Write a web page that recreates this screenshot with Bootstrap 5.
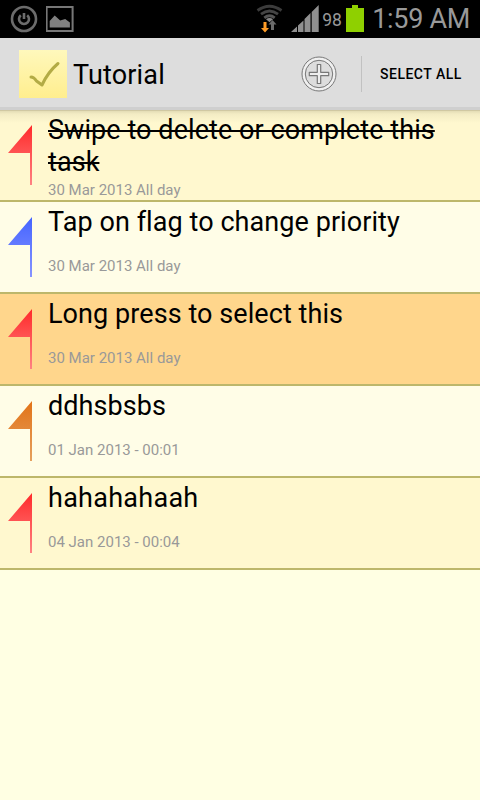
<!DOCTYPE html>
<html lang="en">
<head>
<meta charset="utf-8">
<meta name="viewport" content="width=device-width, initial-scale=1">
<title>Tutorial</title>
<link rel="stylesheet" href="https://cdn.jsdelivr.net/npm/bootstrap@5.3.0/dist/css/bootstrap.min.css">
<style>
body{font-family:Roboto,"Noto Sans",sans-serif;background:#ffffe3;color:#000;min-height:800px;overflow:hidden}
svg{display:block;flex:none}
.status-bar{height:38px;background:#000;color:#999;padding:0 10px 0 10px}
.pct{font-size:17.5px;line-height:38px;padding-top:1px;margin-left:2px;width:20px}
.battery{margin-left:4px}
.clock{font-size:27px;line-height:38px;margin-left:8px;white-space:nowrap;letter-spacing:-.3px}
.action-bar{height:72px;background:#ddd;padding:2px 0 0 19px;border-bottom:3px solid #cfcfcf}
.app-title{font-size:27px;line-height:32px;margin-left:6px;padding-top:2px;letter-spacing:.15px}
.divider{width:1px;height:36px;background:#c1c1c1;margin-left:24px}
.select-all{font-size:14px;font-weight:500;line-height:20px;color:#000;letter-spacing:.5px;margin-left:18px;width:100px;white-space:nowrap}
.list-group-flush>.list-group-item.task{height:92px;padding:4px 8px 0;border:0;border-bottom:2px solid #bdb76b;border-radius:0;color:#000}
.task-a{background:#fff8cf}
.task-b{background:#fffde7}
.task-on{background:#ffd68c}
.task-top{background:linear-gradient(#bdb48f 0,#e3dcb5 1px,#f3ecc4 4px,#fff8cf 13px)}
.flag{margin-top:11px}
.task-text{margin-left:16px}
.task-name{font-size:27px;line-height:32px;min-height:48px;letter-spacing:.07px}
.spaced{letter-spacing:.27px}
.done{text-decoration:line-through;text-decoration-thickness:2px}
.task-date{font-size:15px;line-height:20px;margin-top:2px;color:#999}
</style>
</head>
<body>
<header class="status-bar d-flex align-items-center">
  <svg width="28" height="38" viewBox="0 0 28 38" fill="none" stroke="#6c6c6c"><circle cx="14" cy="19" r="12" stroke-width="2.600"/><path d="M10.800 15.200a5 5 0 1 0 6.400 0M14 13v6" stroke-width="2.600"/></svg>
  <svg class="ms-2" width="28" height="38" viewBox="0 0 28 38"><path d="M.6 7h26v24h-26z" fill="none" stroke="#777" stroke-width="2"/><path d="M3.700 27.500V21l5-5.500 5.500 5 5-1.500 4.700 3.500v5z" fill="#808080"/></svg>
  <svg class="ms-auto" width="28" height="38" viewBox="0 0 28 38" fill="none"><g stroke="#444" stroke-width="2.800"><path d="M1.500 10.500q12-8.500 24 0" stroke="#3b3b3b"/><path d="M5 14.200q8.500-6.400 17 0"/><path d="M8.300 17.800q5.200-4 10.400 0" stroke="#555"/></g><path d="M10 19.300q3.500-2.500 7 0l-3.500 3z" fill="#888"/><path d="M15 30v-5.500h-2.500l4-4.500 4 4.500H18V30z" fill="#6b6b6b"/><path d="M7.500 22h3v6H13l-4 4.500L5 28h2.500z" fill="#ff9c27"/></svg>
  <svg width="36" height="38" viewBox="-5 0 36 38"><path d="M2 32l6-5.500V32zM9 25.500l5.500-5V32H9zM15.500 19l6-6V32h-6zM22.700 12l7-7v27h-7z" fill="#909090"/></svg>
  <span class="pct">98</span>
  <svg class="battery" width="18" height="38" viewBox="0 0 18 38"><path d="M0 8h6V5h6v3h6v24H0z" fill="#8fd000"/></svg>
  <span class="clock">1:59 AM</span>
</header>
<nav class="action-bar d-flex align-items-center">
  <svg width="48" height="48" viewBox="0 0 48 48"><defs><linearGradient id="note" x2="0" y2="1"><stop stop-color="#fff8bc"/><stop offset="1" stop-color="#ffee8e"/></linearGradient></defs><path d="M0 0h48v48H0z" fill="url(#note)"/><path d="M12 27q3 0 5.500 4l5.500 4q6-13 16-21.500" fill="none" stroke="#b3ab45" stroke-width="3" stroke-linecap="round" stroke-linejoin="round"/></svg>
  <span class="app-title">Tutorial</span>
  <svg class="ms-auto" width="36" height="36" viewBox="0 0 36 36" fill="none" stroke="#777"><circle cx="18" cy="18" r="15.500" stroke="#f0f0f0" stroke-width="3"/><circle cx="18" cy="18" r="17"/><circle cx="18" cy="18" r="13.700"/><path d="M16.300 8.500h3.400v7.800h8v3.400h-8v7.800h-3.400v-7.800h-8v-3.400h8z" fill="#eee" stroke-width="1.200" stroke-linejoin="round"/></svg>
  <div class="divider"></div>
  <span class="select-all">SELECT ALL</span>
</nav>
<svg width="0" height="0" class="position-absolute"><defs>
  <linearGradient id="red" x2="0" y2="1"><stop stop-color="#ff2a2a"/><stop offset="1" stop-color="#ff8282"/></linearGradient>
  <linearGradient id="blue" x2="0" y2="1"><stop stop-color="#4464ff"/><stop offset="1" stop-color="#8794ff"/></linearGradient>
  <linearGradient id="orange" x2="0" y2="1"><stop stop-color="#e27317"/><stop offset="1" stop-color="#e5a05e"/></linearGradient>
  <path id="pennant" d="M24 0v60h-2V28H0z"/>
</defs></svg>
<main class="list-group list-group-flush">
  <div class="list-group-item task task-top d-flex align-items-start"><svg class="flag" width="24" height="60"><use href="#pennant" fill="url(#red)"/></svg>
    <div class="task-text"><div class="task-name done">Swipe to delete or complete this<br>task</div><div class="task-date">30 Mar 2013 All day</div></div></div>
  <div class="list-group-item task task-b d-flex align-items-start"><svg class="flag" width="24" height="60"><use href="#pennant" fill="url(#blue)"/></svg>
    <div class="task-text"><div class="task-name">Tap on flag to change priority</div><div class="task-date">30 Mar 2013 All day</div></div></div>
  <div class="list-group-item task task-on d-flex align-items-start"><svg class="flag" width="24" height="60"><use href="#pennant" fill="url(#red)"/></svg>
    <div class="task-text"><div class="task-name">Long press to select this</div><div class="task-date">30 Mar 2013 All day</div></div></div>
  <div class="list-group-item task task-b d-flex align-items-start"><svg class="flag" width="24" height="60"><use href="#pennant" fill="url(#orange)"/></svg>
    <div class="task-text"><div class="task-name">ddhsbsbs</div><div class="task-date">01 Jan 2013 - 00:01</div></div></div>
  <div class="list-group-item task task-a d-flex align-items-start"><svg class="flag" width="24" height="60"><use href="#pennant" fill="url(#red)"/></svg>
    <div class="task-text"><div class="task-name spaced">hahahahaah</div><div class="task-date">04 Jan 2013 - 00:04</div></div></div>
</main>
<script src="https://cdn.jsdelivr.net/npm/bootstrap@5.3.0/dist/js/bootstrap.bundle.min.js"></script>
</body>
</html>
